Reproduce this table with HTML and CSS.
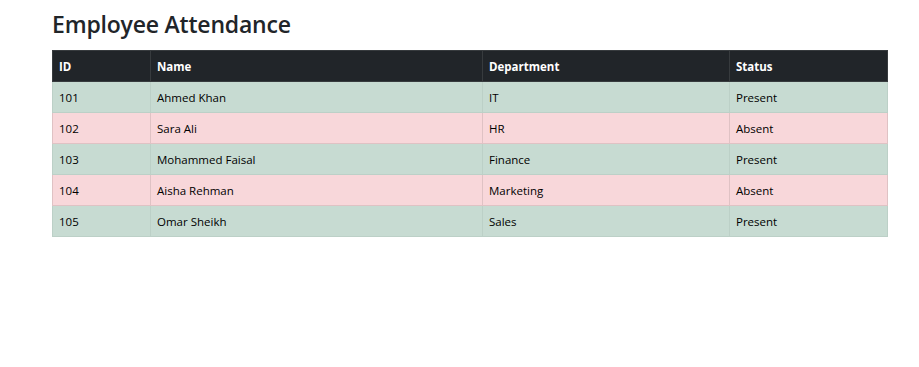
FILE: index.html
```html
<!DOCTYPE html>
<html>
<head>
<meta charset="utf-8">
<link rel="stylesheet" href="styles.css">
</head>
<body>
<div class="container">
  <h2 class="title">Employee Attendance</h2>
  <table class="att">
    <thead>
      <tr><th class="c-id">ID</th><th class="c-name">Name</th><th class="c-dept">Department</th><th class="c-status">Status</th></tr>
    </thead>
    <tbody>
      <tr class="ok"><td>101</td><td>Ahmed Khan</td><td>IT</td><td>Present</td></tr>
      <tr class="bad"><td>102</td><td>Sara Ali</td><td>HR</td><td>Absent</td></tr>
      <tr class="ok"><td>103</td><td>Mohammed Faisal</td><td>Finance</td><td>Present</td></tr>
      <tr class="bad"><td>104</td><td>Aisha Rehman</td><td>Marketing</td><td>Absent</td></tr>
      <tr class="ok"><td>105</td><td>Omar Sheikh</td><td>Sales</td><td>Present</td></tr>
    </tbody>
  </table>
</div>
</body>
</html>
```
FILE: styles.css
```css
html, body { margin: 0; padding: 0; background: #fff; }
body { font-family: "Open Sans", "Noto Sans", sans-serif; color: #212529; }
.container { padding: 9px 31px 0 52px; }
.title { margin: 0 0 10px 0; font-size: 23px; font-weight: 600; line-height: 31px; letter-spacing: -0.2px; }
.att { width: 836px; border-collapse: collapse; font-size: 11.5px; table-layout: fixed; }
.att th, .att td { text-align: left; padding: 0 6px; height: 30px; border: 1px solid; }
.att th { background: #212529; color: #fff; border-color: #373b3e; font-weight: 700; height: 30px; }
.c-id { width: 85px; }
.c-name { width: 319px; }
.c-dept { width: 234px; }
.ok td { background: #c7dbd2; border-color: #bcd0c7; color: #000; }
.bad td { background: #f8d7da; border-color: #dfc2c4; color: #000; }
```
